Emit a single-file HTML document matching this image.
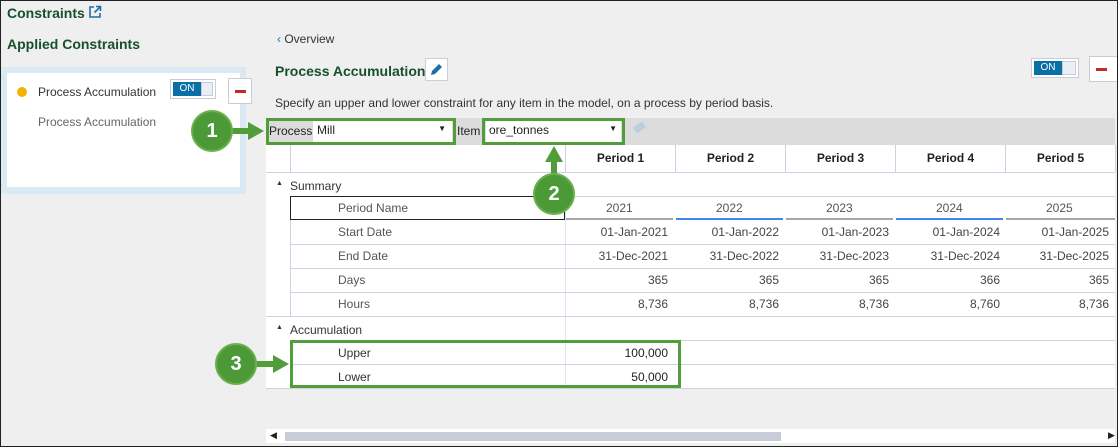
<!DOCTYPE html>
<html><head><meta charset="utf-8"><style>
*{margin:0;padding:0;box-sizing:border-box}
body{width:1118px;height:447px;overflow:hidden;background:#efefef;font-family:"Liberation Sans",sans-serif;font-size:12px;color:#333;position:relative}
.a{position:absolute}
.frame{position:absolute;left:0;top:0;width:1118px;height:447px;border:1px solid #222;pointer-events:none;z-index:20}
.g{color:#17502d;font-weight:bold;font-size:14px}
.hl{position:absolute;left:266px;width:849px;height:1px;background:#cfd0e0}
.vl{position:absolute;width:1px;background:#cfd0e0}
.num{position:absolute;width:100px;text-align:right;color:#444}
.ph{position:absolute;top:145px;height:27px;width:110px;text-align:center;font-weight:bold;line-height:27px;color:#222;border-right:1px solid #cfd0e0}
.gb{position:absolute;border:3px solid #519d3b;z-index:10}
.circ{position:absolute;width:42px;height:42px;border-radius:50%;background:#4c9a37;border:2px solid #6ab04f;color:#fff;font-weight:bold;font-size:20px;text-align:center;line-height:38px;z-index:11}
.tog{position:absolute;height:20px;border:1px solid #c8cbd8;background:#fff;padding:2px;display:flex}
.tog b{flex:0 0 28px;height:14px;background:#0a6fa4;color:#fff;font-size:10px;font-weight:normal;text-align:center;line-height:14px}
.tog i{flex:1;height:14px;background:#e9eff5;border:1px solid #c8cbd8}
.minus{position:absolute;width:24px;height:26px;border:1px solid #c8cbd8;background:#fff}
.minus:after{content:"";position:absolute;left:6px;top:11px;width:11px;height:3px;background:#c62828}
</style></head><body>
<div class="frame"></div>
<div class="a g" style="left:7px;top:5px">Constraints</div>
<svg class="a" style="left:88px;top:5px" width="14" height="14" viewBox="0 0 14 14"><path d="M6 2H2v10h10V8" fill="none" stroke="#1e6fa8" stroke-width="1.6"/><path d="M8 1.5h4.5V6M12.5 1.5L6.5 7.5" fill="none" stroke="#1e6fa8" stroke-width="1.6"/></svg>
<div class="a g" style="left:7px;top:36px">Applied Constraints</div>
<div class="a" style="left:0;top:67px;width:246px;height:127px;background:#dbeaf2"></div>
<div class="a" style="left:7px;top:73px;width:233px;height:114px;background:#fff"></div>
<div class="a" style="left:17px;top:87px;width:10px;height:10px;border-radius:50%;background:#f2b200"></div>
<div class="a" style="left:38px;top:85px;font-size:12px;color:#333">Process Accumulation</div>
<div class="a" style="left:38px;top:115px;font-size:12px;color:#666">Process Accumulation</div>
<div class="tog" style="left:170px;top:79px;width:46px"><b>ON</b><i></i></div>
<div class="minus" style="left:228px;top:78px"></div>

<div class="a" style="left:277px;top:32px;font-size:12px;color:#333"><span style="color:#1e6fa8">&#8249;</span> Overview</div>
<div class="a g" style="left:275px;top:63px">Process Accumulation</div>
<div class="a" style="left:425px;top:58px;width:23px;height:23px;border:1px solid #ccd;background:#fff"></div>
<svg class="a" style="left:429px;top:62px" width="15" height="15" viewBox="0 0 15 15"><path d="M2 13l1-4 7-7 3 3-7 7z" fill="#1e6fa8"/></svg>
<div class="tog" style="left:1031px;top:58px;width:48px"><b>ON</b><i></i></div>
<div class="minus" style="left:1089px;top:56px;width:30px"></div>
<div class="a" style="left:275px;top:96px;color:#333">Specify an upper and lower constraint for any item in the model, on a process by period basis.</div>

<div class="a" style="left:266px;top:118px;width:849px;height:27px;background:#dcdcdc"></div>
<div class="a" style="left:269px;top:124px;color:#222">Process</div>
<div class="a" style="left:313px;top:121px;width:139px;height:21px;background:#fff;padding:2px 4px;color:#222">Mill<span style="position:absolute;right:6px;top:3px;font-size:8px">&#9660;</span></div>
<div class="a" style="left:457px;top:124px;color:#222">Item</div>
<div class="a" style="left:486px;top:121px;width:135px;height:21px;background:#fff;padding:2px 3px;color:#222">ore_tonnes<span style="position:absolute;right:4px;top:3px;font-size:8px">&#9660;</span></div>
<div class="a" style="left:634px;top:124px;width:11px;height:7px;background:#b8cfe0;transform:rotate(-35deg)"></div>

<div class="a" style="left:266px;top:145px;width:849px;height:243px;background:#fff"></div>
<div class="vl" style="left:290px;top:145px;height:27px"></div>
<div class="vl" style="left:565px;top:145px;height:27px"></div>
<div class="ph" style="left:566px">Period 1</div>
<div class="ph" style="left:676px">Period 2</div>
<div class="ph" style="left:786px">Period 3</div>
<div class="ph" style="left:896px">Period 4</div>
<div class="ph" style="left:1006px">Period 5</div>
<div class="hl" style="top:172px"></div>
<div class="a" style="left:276px;top:180px;font-size:7px">&#9650;</div>
<div class="a" style="left:290px;top:179px;color:#333">Summary</div>
<div class="hl" style="top:196px;left:290px;width:825px"></div>
<div class="vl" style="left:290px;top:196px;height:120px"></div>
<div class="vl" style="left:565px;top:196px;height:192px;background:#dbe8f2"></div>
<div class="a" style="left:290px;top:196px;width:275px;height:24px;border:1px solid #222"></div>
<div class="a" style="left:338px;top:201px;color:#555">Period Name</div>
<div class="a" style="left:338px;top:225px;color:#555">Start Date</div>
<div class="a" style="left:338px;top:249px;color:#555">End Date</div>
<div class="a" style="left:338px;top:273px;color:#555">Days</div>
<div class="a" style="left:338px;top:297px;color:#555">Hours</div>
<div class="a" style="left:566px;top:218px;width:107px;height:2px;background:#a6a6a6"></div>
<div class="a" style="left:676px;top:218px;width:107px;height:2px;background:#3f87e6"></div>
<div class="a" style="left:786px;top:218px;width:107px;height:2px;background:#a6a6a6"></div>
<div class="a" style="left:896px;top:218px;width:107px;height:2px;background:#3f87e6"></div>
<div class="a" style="left:1006px;top:218px;width:109px;height:2px;background:#a6a6a6"></div>
<div class="a" style="left:606px;top:201px;color:#555">2021</div>
<div class="a" style="left:716px;top:201px;color:#555">2022</div>
<div class="a" style="left:826px;top:201px;color:#555">2023</div>
<div class="a" style="left:936px;top:201px;color:#555">2024</div>
<div class="a" style="left:1046px;top:201px;color:#555">2025</div>
<div class="hl" style="top:244px;left:290px;width:825px"></div>
<div class="hl" style="top:268px;left:290px;width:825px"></div>
<div class="hl" style="top:292px;left:290px;width:825px"></div>
<div class="hl" style="top:316px"></div>
<div class="hl" style="top:340px;left:290px;width:825px"></div>
<div class="hl" style="top:364px;left:290px;width:825px"></div>
<div class="hl" style="top:388px"></div>

<div class="num" style="left:568px;top:225px">01-Jan-2021</div><div class="num" style="left:679px;top:225px">01-Jan-2022</div><div class="num" style="left:789px;top:225px">01-Jan-2023</div><div class="num" style="left:900px;top:225px">01-Jan-2024</div><div class="num" style="left:1009px;top:225px">01-Jan-2025</div>
<div class="num" style="left:568px;top:249px">31-Dec-2021</div><div class="num" style="left:679px;top:249px">31-Dec-2022</div><div class="num" style="left:789px;top:249px">31-Dec-2023</div><div class="num" style="left:900px;top:249px">31-Dec-2024</div><div class="num" style="left:1009px;top:249px">31-Dec-2025</div>
<div class="num" style="left:568px;top:273px">365</div><div class="num" style="left:679px;top:273px">365</div><div class="num" style="left:789px;top:273px">365</div><div class="num" style="left:900px;top:273px">366</div><div class="num" style="left:1009px;top:273px">365</div>
<div class="num" style="left:568px;top:297px">8,736</div><div class="num" style="left:679px;top:297px">8,736</div><div class="num" style="left:789px;top:297px">8,736</div><div class="num" style="left:900px;top:297px">8,760</div><div class="num" style="left:1009px;top:297px">8,736</div>

<div class="a" style="left:276px;top:324px;font-size:7px">&#9650;</div>
<div class="a" style="left:290px;top:323px;color:#333">Accumulation</div>
<div class="a" style="left:338px;top:346px;color:#333">Upper</div>
<div class="a" style="left:338px;top:370px;color:#333">Lower</div>
<div class="num" style="left:568px;top:346px;color:#222">100,000</div>
<div class="num" style="left:568px;top:370px;color:#222">50,000</div>

<div class="a" style="left:266px;top:429px;width:849px;height:14px;background:#fff"></div>
<div class="a" style="left:270px;top:430px;font-size:9px;color:#222">&#9664;</div>
<div class="a" style="left:285px;top:432px;width:496px;height:9px;background:#c9cbd8"></div>
<div class="a" style="left:1108px;top:430px;font-size:9px;color:#222">&#9654;</div>

<div class="gb" style="left:266px;top:118px;width:190px;height:27px"></div>
<div class="gb" style="left:482px;top:118px;width:143px;height:27px"></div>
<div class="gb" style="left:290px;top:340px;width:391px;height:48px"></div>

<svg class="a" style="left:0;top:0;z-index:10" width="1118" height="447">
<g fill="#519d3b" stroke="none">
<rect x="225" y="128" width="25" height="6"/><polygon points="248,122 264,131 248,140"/>
<rect x="551" y="160" width="6" height="20"/><polygon points="545,162 554,146 563,162"/>
<rect x="250" y="361" width="25" height="6"/><polygon points="273,355 289,364 273,373"/>
</g></svg>
<div class="circ" style="left:191px;top:110px">1</div>
<div class="circ" style="left:533px;top:173px">2</div>
<div class="circ" style="left:215px;top:343px">3</div>
</body></html>
